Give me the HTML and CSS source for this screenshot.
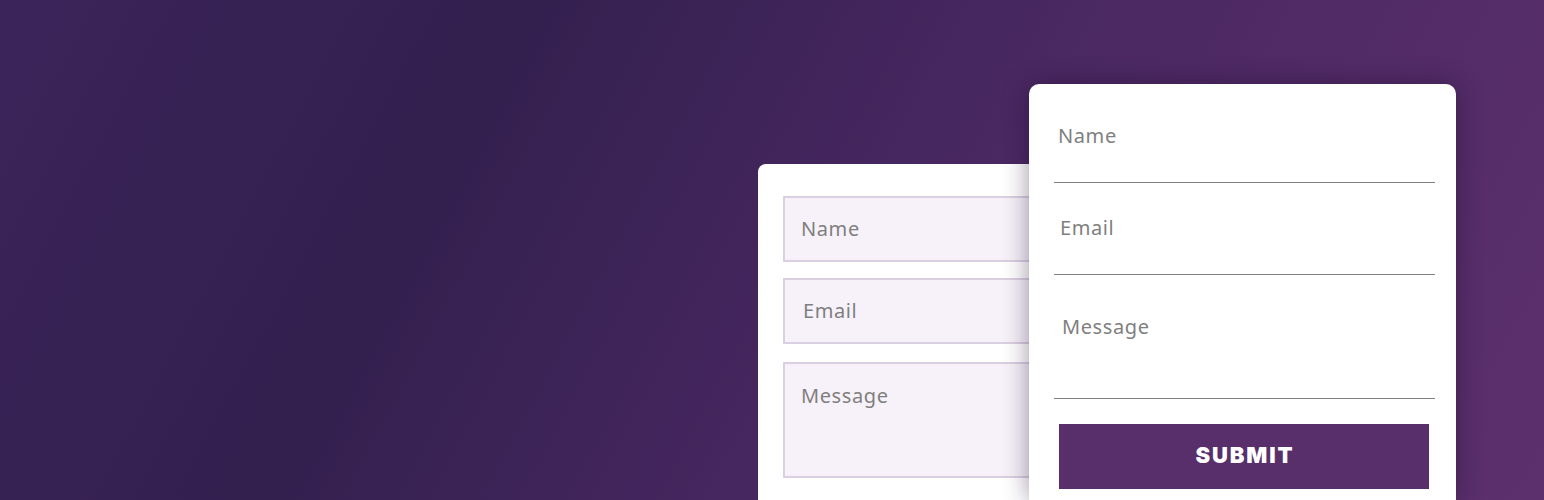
FILE: index.html
```html
<!DOCTYPE html>
<html lang="en">
<head>
<meta charset="utf-8">
<title>Contact form</title>
<link rel="stylesheet" href="styles.css">
</head>
<body>
<main class="stage">
  <form class="card card-back">
    <input class="box-input" type="text" placeholder="Name">
    <input class="box-input box-email" type="email" placeholder="Email">
    <textarea class="box-input box-message" placeholder="Message"></textarea>
  </form>
  <form class="card card-front">
    <input class="line-input line-name" type="text" placeholder="Name">
    <input class="line-input line-email" type="email" placeholder="Email">
    <textarea class="line-input line-message" placeholder="Message"></textarea>
    <button class="submit" type="button">SUBMIT</button>
  </form>
</main>
</body>
</html>
```

FILE: styles.css
```css
html, body {
  margin: 0;
  padding: 0;
  height: 500px;
  overflow: hidden;
}

body {
  background: linear-gradient(118deg, #3b2459 0%, #33204f 29%, #4a2862 60%, #5c306d 100%);
  font-family: "Noto Sans", "DejaVu Sans", sans-serif;
}

.stage {
  display: flex;
  align-items: flex-start;
  padding-left: 758px;
  height: 500px;
  overflow: hidden;
}

.card {
  background: #ffffff;
  display: flex;
  flex-direction: column;
  box-sizing: border-box;
  flex-shrink: 0;
  overflow: hidden;
}

.card-back {
  width: 400px;
  margin-top: 164px;
  height: 336px;
  border-radius: 8px 8px 0 0;
  padding: 32px 0 0 25px;
  gap: 16px;
}

.card-front {
  position: relative;
  z-index: 2;
  width: 427px;
  height: 416px;
  margin-top: 84px;
  margin-left: -129px;
  border-radius: 10px 10px 0 0;
  padding: 0 21px 0 25px;
  box-shadow: 0 0 26px rgba(30, 10, 45, 0.45);
}

input, textarea, button {
  font-family: inherit;
  outline: none;
  margin: 0;
}

.box-input {
  display: block;
  box-sizing: border-box;
  width: 100%;
  height: 66px;
  flex-shrink: 0;
  background: #f7f2f9;
  border: 2px solid #dbd0e2;
  border-radius: 0;
  padding: 0 0 1px 16px;
  font-size: 20px;
  letter-spacing: 0.6px;
  color: #7d7d7d;
}

.box-email {
  padding-left: 18px;
}

.box-message {
  height: 116px;
  margin-top: 2px;
  resize: none;
  padding-top: 19px;
  line-height: 26px;
}

.box-input::placeholder,
.line-input::placeholder {
  color: #7f7f7f;
  opacity: 1;
}

.line-input {
  display: block;
  box-sizing: border-box;
  width: 100%;
  flex-shrink: 0;
  border: 0;
  border-bottom: 1px solid #808080;
  background: transparent;
  border-radius: 0;
  font-size: 20px;
  letter-spacing: 0.6px;
  color: #7d7d7d;
  padding: 0 0 0 4px;
}

.line-name {
  height: 99px;
  padding-top: 4px;
}

.line-email {
  height: 92px;
  padding-bottom: 3px;
  padding-left: 6px;
}

.line-message {
  height: 124px;
  resize: none;
  padding-top: 39px;
  padding-left: 8px;
  line-height: 26px;
}

.submit {
  align-self: stretch;
  flex-shrink: 0;
  margin: 25px 6px 0 5px;
  height: 65px;
  border: 0;
  border-radius: 0;
  background: #582e6b;
  color: #ffffff;
  font-family: "Inter", "Liberation Sans", sans-serif;
  font-weight: 900;
  font-size: 22px;
  letter-spacing: 1.9px;
  padding: 0 0 3px 2px;
  cursor: pointer;
}
```
